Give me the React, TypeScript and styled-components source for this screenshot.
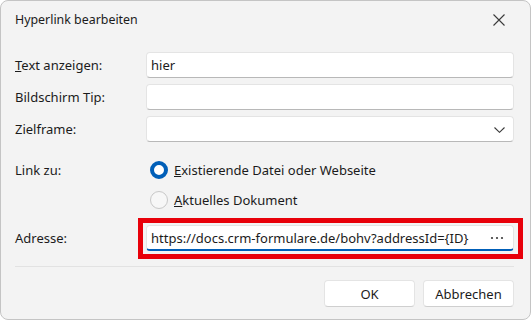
import React, { useState } from "react";
import styled, { createGlobalStyle } from "styled-components";

const GlobalStyle = createGlobalStyle`
  html, body {
    margin: 0;
    padding: 0;
    background: #ffffff;
  }
  body {
    font-family: "Segoe UI", "Noto Sans", "Open Sans", sans-serif;
    font-size: 13px;
    color: #1b1b1b;
  }
`;

const App = () => {
  const [target, setTarget] = useState("file");
  const [form, setForm] = useState({
    text: "hier",
    tip: "",
    frame: "",
    address: "https://docs.crm-formulare.de/bohv?addressId={ID}",
  });

  function updateForm(key: string, value: string) {
    setForm({ ...form, [key]: value });
  }

  return (
    <>
      <GlobalStyle />
      <Dialog>
        <TitleBar>
          <Title>Hyperlink bearbeiten</Title>
          <CloseButton aria-label="Schließen">
            <svg width="12" height="12" viewBox="0 0 12 12">
              <path d="M0.5 0.5 L11.5 11.5 M11.5 0.5 L0.5 11.5" stroke="#3a3a3a" strokeWidth="1.1" fill="none" />
            </svg>
          </CloseButton>
        </TitleBar>

        <Body>
          <Row>
            <Label>
              <u>T</u>ext anzeigen:
            </Label>
            <TextBox value={form.text} onChange={(e) => updateForm("text", e.target.value)} />
          </Row>
          <Row>
            <Label>Bildschirm Tip:</Label>
            <TextBox value={form.tip} onChange={(e) => updateForm("tip", e.target.value)} />
          </Row>
          <Row>
            <Label>Zielframe:</Label>
            <Combo>
              <TextBox value={form.frame} onChange={(e) => updateForm("frame", e.target.value)} />
              <Chevron width="11" height="6" viewBox="0 0 11 6">
                <path d="M0.5 0.5 L5.5 5.3 L10.5 0.5" stroke="#3a3a3a" strokeWidth="1.1" fill="none" />
              </Chevron>
            </Combo>
          </Row>

          <LinkGroup>
            <Label $line={18}>Link zu:</Label>
            <Options>
              <Option onClick={() => setTarget("file")}>
                <Radio $checked={target === "file"} />
                <span>
                  <u>E</u>xistierende Datei oder Webseite
                </span>
              </Option>
              <Option onClick={() => setTarget("doc")}>
                <Radio $checked={target === "doc"} />
                <span>
                  <u>A</u>ktuelles Dokument
                </span>
              </Option>
            </Options>
          </LinkGroup>

          <Row $spaced>
            <Label>Adresse:</Label>
            <Highlight>
              <TextBox
                $focused
                value={form.address}
                onChange={(e) => updateForm("address", e.target.value)}
              />
              <Dots width="14" height="4" viewBox="0 0 14 4">
                <circle cx="2" cy="2" r="1.1" fill="#3a3a3a" />
                <circle cx="7" cy="2" r="1.1" fill="#3a3a3a" />
                <circle cx="12" cy="2" r="1.1" fill="#3a3a3a" />
              </Dots>
              <RedFrame />
            </Highlight>
          </Row>
        </Body>

        <Separator />

        <Footer>
          <Button>OK</Button>
          <Button>Abbrechen</Button>
        </Footer>
      </Dialog>
    </>
  );
};

export default App;

const Dialog = styled.div`
  box-sizing: border-box;
  width: 531px;
  height: 320px;
  background: #f3f3f3;
  border: 1px solid #c4c4c4;
  border-radius: 8px;
  padding: 0 16px 0 14px;
  display: flex;
  flex-direction: column;
`;

const TitleBar = styled.div`
  height: 37px;
  display: flex;
  align-items: center;
  justify-content: space-between;
`;

const Title = styled.div`
  font-size: 12.4px;
  color: #1b1b1b;
`;

const CloseButton = styled.button`
  border: none;
  background: transparent;
  padding: 0;
  margin-right: 8px;
  width: 14px;
  height: 14px;
  display: flex;
  align-items: center;
  justify-content: center;
`;

const Body = styled.div`
  margin-top: 14px;
  display: flex;
  flex-direction: column;
  gap: 6px;
`;

const Row = styled.div<{ $spaced?: boolean }>`
  display: grid;
  grid-template-columns: 131px 1fr;
  align-items: center;
  margin-top: ${(p) => (p.$spaced ? "10px" : "0")};
`;

const Label = styled.div<{ $line?: number }>`
  font-size: 13px;
  line-height: ${(p) => (p.$line ? `${p.$line}px` : "normal")};
  color: #1b1b1b;
`;

const TextBox = styled.input<{ $focused?: boolean }>`
  box-sizing: border-box;
  width: 100%;
  height: 26px;
  padding: 0 8px 0 4px;
  background: #ffffff;
  border: 1px solid #e4e4e4;
  border-bottom: ${(p) => (p.$focused ? "2px solid #005fb8" : "1px solid #b8b8b8")};
  border-radius: 4px;
  font-family: inherit;
  font-size: 13px;
  color: #1b1b1b;
  outline: none;
`;

const Combo = styled.div`
  position: relative;
`;

const Chevron = styled.svg`
  position: absolute;
  right: 9px;
  top: 11px;
`;

const LinkGroup = styled.div`
  display: grid;
  grid-template-columns: 131px 1fr;
  align-items: start;
  margin-top: 13px;
`;

const Options = styled.div`
  display: flex;
  flex-direction: column;
  gap: 12px;
  margin-left: 4px;
`;

const Option = styled.label`
  display: flex;
  align-items: center;
  gap: 6px;
  height: 18px;
  cursor: default;
`;

const Radio = styled.span<{ $checked?: boolean }>`
  box-sizing: border-box;
  width: 18px;
  height: 18px;
  border-radius: 50%;
  background: ${(p) => (p.$checked ? "#ffffff" : "#f7f7f7")};
  border: ${(p) => (p.$checked ? "4px solid #005fb8" : "1px solid #c8c8c8")};
`;

const Highlight = styled.div`
  position: relative;
`;

const Dots = styled.svg`
  position: absolute;
  right: 10px;
  top: 11px;
`;

const RedFrame = styled.div`
  position: absolute;
  left: -8px;
  right: -9px;
  top: -7px;
  bottom: -8px;
  border: 5px solid #e8000a;
  pointer-events: none;
`;

const Separator = styled.div`
  height: 1px;
  background: #e2e2e2;
  margin-top: 15px;
`;

const Footer = styled.div`
  margin-top: 13px;
  display: flex;
  justify-content: flex-end;
  gap: 8px;
`;

const Button = styled.button`
  box-sizing: border-box;
  width: 91px;
  height: 27px;
  background: #ffffff;
  border: 1px solid #e4e4e4;
  border-bottom-color: #cfcfcf;
  border-radius: 4px;
  font-family: inherit;
  font-size: 13px;
  color: #1b1b1b;
`;
